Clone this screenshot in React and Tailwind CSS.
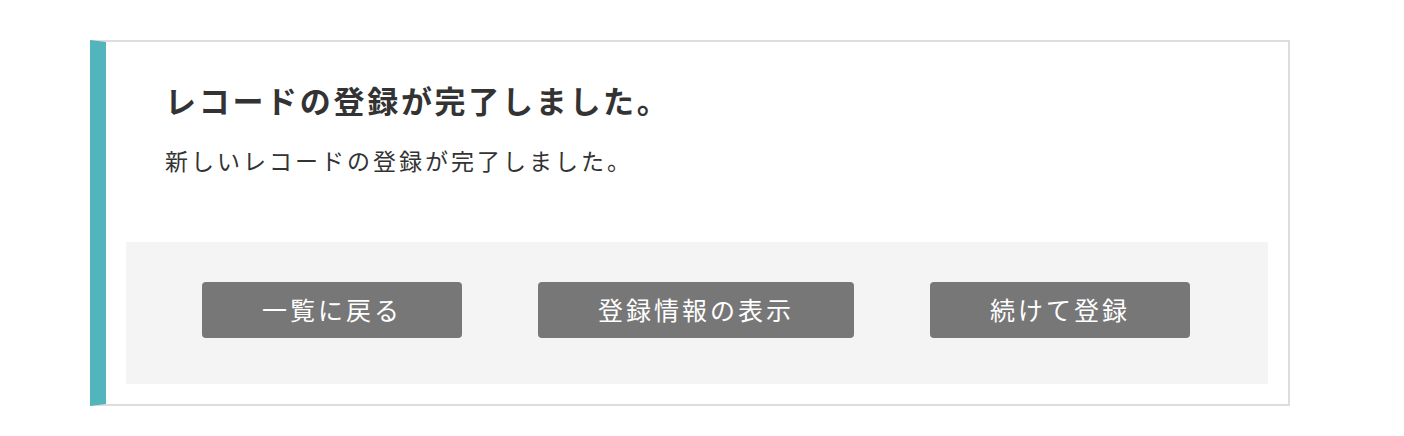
import React from "react";

const font = { fontFamily: '"Noto Sans CJK JP", "Noto Sans", sans-serif' };

export default function App() {
  return (
    <div className="w-[1404px] h-[436px] bg-white" style={font}>
      <div className="ml-[90px] pt-[40px]">
        <div className="w-[1200px] border-2 border-l-[16px] border-[#dddddd] border-l-[#52b5bb] bg-white">
          <div className="pl-[59px] pt-[37px]">
            <h1 className="text-[31px] leading-[42px] font-bold text-[#333333] tracking-[2.7px]">
              レコードの登録が完了しました。
            </h1>
            <p className="mt-[24px] text-[23px] leading-[30px] text-[#333333] tracking-[3px]">
              新しいレコードの登録が完了しました。
            </p>
          </div>
          <div className="mx-[20px] mb-[20px] mt-[67px] bg-[#f4f4f4] pt-[40px] pb-[46px] pr-[2px] flex justify-center gap-[76px]">
            <button className="h-[56px] px-[60px] rounded-[4px] bg-[#777777] text-white text-[25px] tracking-[3px]">
              一覧に戻る
            </button>
            <button className="h-[56px] px-[60px] rounded-[4px] bg-[#777777] text-white text-[25px] tracking-[3px]">
              登録情報の表示
            </button>
            <button className="h-[56px] px-[60px] rounded-[4px] bg-[#777777] text-white text-[25px] tracking-[3px]">
              続けて登録
            </button>
          </div>
        </div>
      </div>
    </div>
  );
}
